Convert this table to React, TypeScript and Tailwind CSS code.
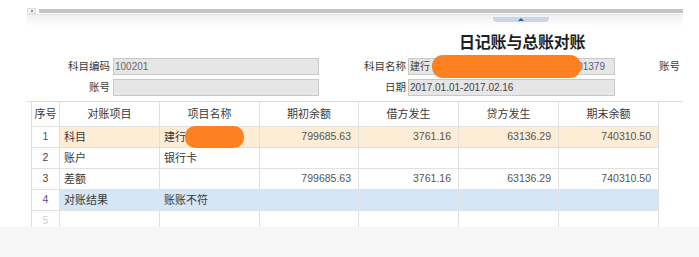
import React from "react";

const cols = "grid grid-cols-[29px_100px_100px_99px_100px_100px_100px]";
const cellBase = "border-r border-b border-[#e1e1e1] h-full flex items-center";

type Row = {
  no: string;
  noColor: string;
  bg: string;
  item: string;
  name: React.ReactNode;
  v: string[];
};

const rows: Row[] = [
  { no: "1", noColor: "text-[#3f5680]", bg: "bg-[#fdecd6]", item: "科目", name: "建行", v: ["799685.63", "3761.16", "63136.29", "740310.50"] },
  { no: "2", noColor: "text-[#444]", bg: "bg-white", item: "账户", name: "银行卡", v: ["", "", "", ""] },
  { no: "3", noColor: "text-[#444]", bg: "bg-white", item: "差额", name: "", v: ["799685.63", "3761.16", "63136.29", "740310.50"] },
  { no: "4", noColor: "text-[#5b4a8c]", bg: "bg-[#d5e7f6]", item: "对账结果", name: "账账不符", v: ["", "", "", ""] },
  { no: "5", noColor: "text-[#cfcfcf]", bg: "bg-white", item: "", name: "", v: ["", "", "", ""] },
];

export default function App() {
  return (
    <div className="w-[699px] h-[257px] bg-white overflow-hidden font-['Liberation_Sans','Noto_Sans_CJK_SC',sans-serif] text-[#333]">
      <div className="h-[227px] overflow-hidden relative">
        <div className="ml-[27px] w-[656px] pt-[7px]">
          {/* top scroll strip */}
          <div className="h-[7px] flex items-center">
            <div className="w-[9px] h-[6px] bg-[#f0f0f0] border border-[#e0e0e0] flex items-center justify-center">
              <div className="w-[2px] h-[2px] bg-[#999]" />
            </div>
            <div className="ml-[3px] flex-1 h-[4px] bg-[#c4c4c4]" />
          </div>
          <div className="h-[1px] bg-[#e4e4e4]" />
          <div className="h-[12px] bg-gradient-to-b from-[#f1f1f1] to-white pt-[2px]">
            <div className="ml-[466px] w-[56px] h-[5px] bg-[#c9d6e6] rounded-b-[4px] flex items-start justify-center">
              <div className="mt-[1px] w-0 h-0 border-l-[3px] border-r-[3px] border-b-[3px] border-l-transparent border-r-transparent border-b-[#2a5caa]" />
            </div>
          </div>

          {/* title */}
          <div className="h-[31px] pt-[4px] pl-[432px]">
            <div className="text-[16px] leading-[20px] font-bold text-[#1f1f1f] tracking-[-0.2px] font-['Noto_Sans_CJK_SC',sans-serif]">
              日记账与总账对账
            </div>
          </div>

          {/* form */}
          <div className="pb-[5px] border-b border-[#dcdcdc]">
            <div className="flex items-center h-[17px]">
              <div className="w-[83px] text-right text-[10.5px] text-[#3a3a3a]">科目编码</div>
              <div className="ml-[3px] w-[206px] h-[17px] bg-[#e6e6e6] border border-[#c8c8c8] flex items-center px-[1px] text-[10px] text-[#6a6a6a]">
                100201
              </div>
              <div className="w-[87px] text-right text-[10.5px] text-[#3a3a3a]">科目名称</div>
              <div className="ml-[2px] w-[207px] h-[17px] bg-[#e6e6e6] border border-[#c8c8c8] flex items-center justify-between px-[1px] pr-[9px] text-[10px] text-[#444]">
                <span>建行</span>
                <span className="text-[#56607a]">01379</span>
              </div>
              <div className="ml-[44px] text-[10.5px] text-[#3a3a3a]">账号</div>
            </div>
            <div className="flex items-center h-[17px] mt-[4px]">
              <div className="w-[83px] text-right text-[10.5px] text-[#3a3a3a]">账号</div>
              <div className="ml-[3px] w-[206px] h-[17px] bg-[#e6e6e6] border border-[#c8c8c8]" />
              <div className="w-[87px] text-right text-[10.5px] text-[#3a3a3a]">日期</div>
              <div className="ml-[2px] w-[207px] h-[17px] bg-[#e6e6e6] border border-[#c8c8c8] flex items-center px-[1px] text-[10px] text-[#444]">
                2017.01.01-2017.02.16
              </div>
            </div>
          </div>

          {/* table */}
          <div className="ml-[4px] w-[628px]">
            <div className={`${cols} h-[25px] text-[11px] text-[#3a3a3a]`}>
              {["序号", "对账项目", "项目名称", "期初余额", "借方发生", "贷方发生", "期末余额"].map((h, i) => (
                <div key={h} className={`${cellBase} justify-center ${i === 0 ? "border-l" : ""}`}>
                  {h}
                </div>
              ))}
            </div>
            {rows.map((r) => (
              <div key={r.no} className={`${cols} h-[21px]`}>
                <div className={`${cellBase} border-l justify-center bg-white text-[10.5px] ${r.noColor}`}>{r.no}</div>
                <div className={`${cellBase} ${r.bg} pl-[4px] text-[11px] text-[#3a3a3a]`}>{r.item}</div>
                <div className={`${cellBase} ${r.bg} pl-[4px] text-[11px] text-[#3a3a3a]`}>{r.name}</div>
                {r.v.map((v, i) => (
                  <div key={i} className={`${cellBase} ${r.bg} justify-end pr-[7px] text-[10.5px] text-[#555]`}>
                    {v}
                  </div>
                ))}
              </div>
            ))}
          </div>
        </div>

        {/* redaction blobs */}
        <div className="absolute left-[432px] top-[55px] w-[149px] h-[23px] bg-[#fd8021] rounded-[11px]" />
        <div className="absolute left-[185px] top-[126px] w-[59px] h-[22px] bg-[#fd8021] rounded-[10px]" />
      </div>
      <div className="h-[30px] bg-[#f7f7f7]" />
    </div>
  );
}
